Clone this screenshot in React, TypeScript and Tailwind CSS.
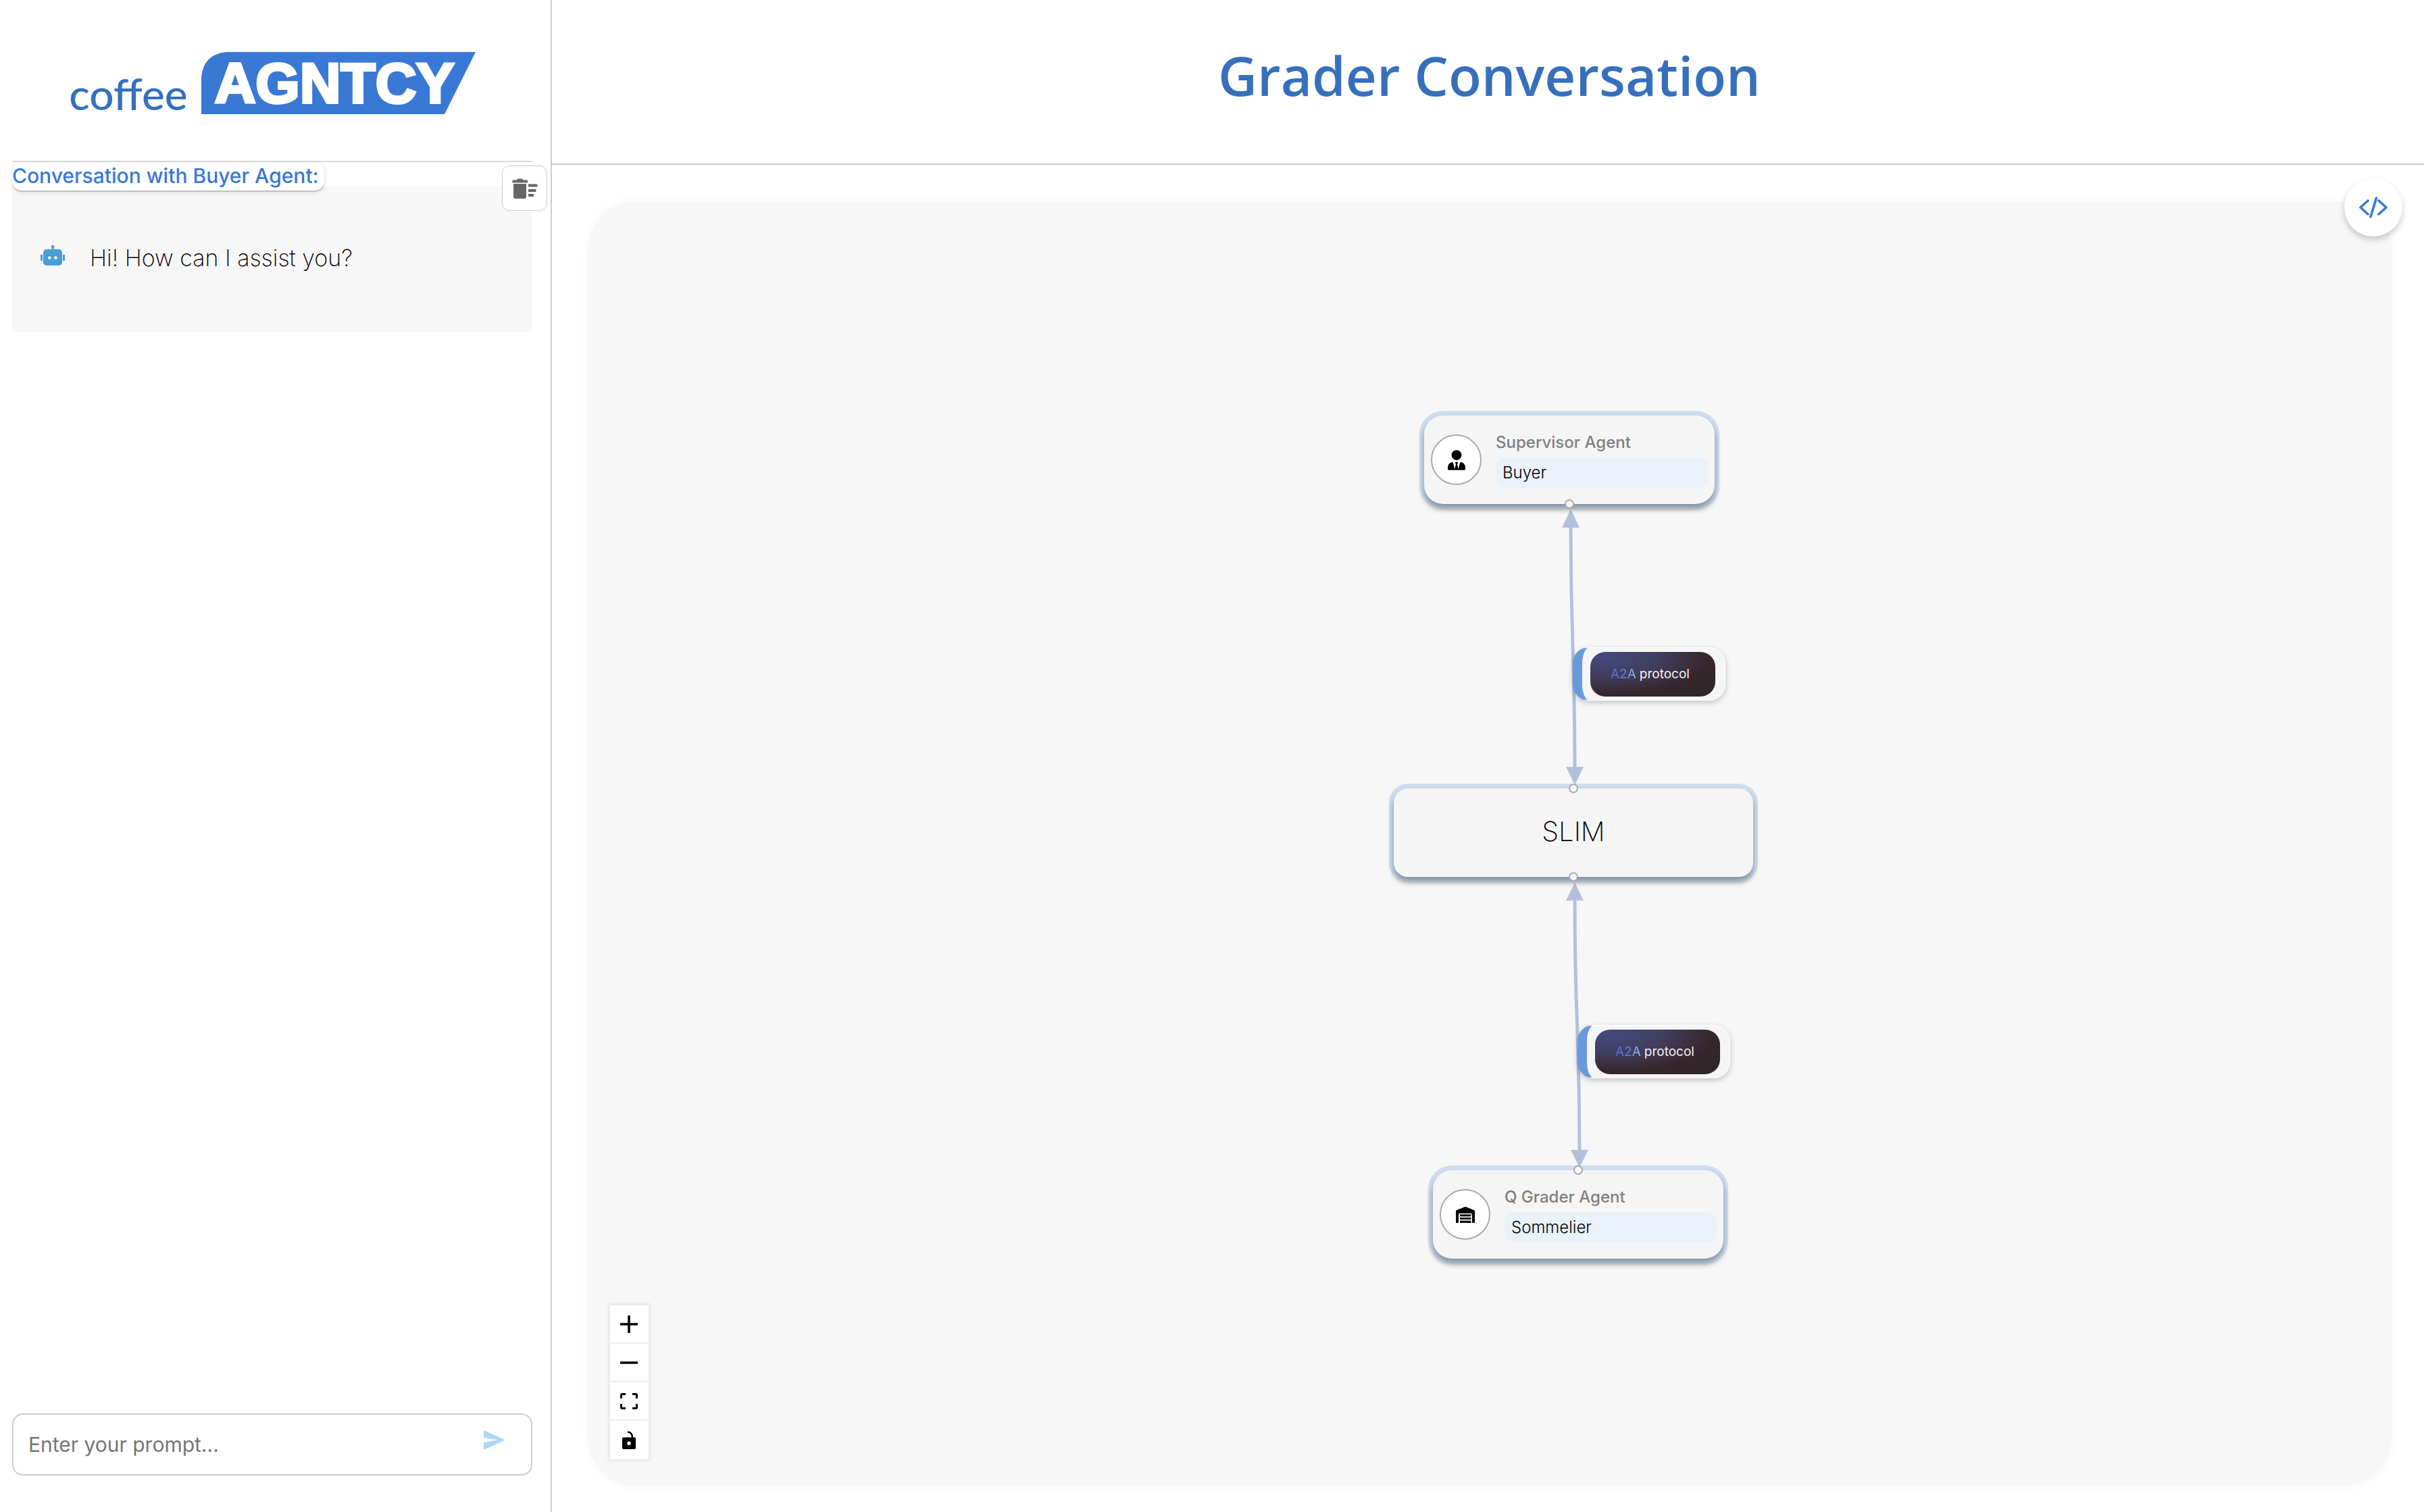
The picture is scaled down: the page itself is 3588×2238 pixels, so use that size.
import type { ReactNode } from "react";

function RobotIcon() {
  return (
    <svg viewBox="0 0 36 32" className="h-8 w-9 shrink-0" aria-hidden="true">
      <g fill="#489dd6">
        <rect x="4" y="7" width="28" height="24" rx="5" />
        <rect x="0" y="15" width="3" height="9" />
        <rect x="33" y="15" width="3" height="9" />
        <rect x="16.5" y="3" width="3" height="5" />
        <circle cx="18" cy="3" r="2.3" />
      </g>
      <g fill="#fff">
        <circle cx="13.3" cy="19.5" r="2.3" />
        <circle cx="22.3" cy="19.5" r="2.3" />
      </g>
    </svg>
  );
}

function ClearIcon() {
  return (
    <svg viewBox="0 0 38 31" className="h-[31px] w-[38px]" aria-hidden="true" fill="#666">
      <path d="M0.5 3.5H6.5L8.5 1.5H14.5L16.5 3.5H23V7.5H0.5z" />
      <path d="M2 9H21V28Q21 31 18 31H5Q2 31 2 28z" />
      <rect x="24" y="9.500" width="13.500" height="4" />
      <rect x="24" y="17" width="11.500" height="4" />
      <rect x="24" y="24" width="8" height="4" />
    </svg>
  );
}

function BuyerIcon() {
  return (
    <svg viewBox="0 0 448 512" className="h-[30px] w-[26px]" aria-hidden="true">
      <path d="M96 128a128 128 0 1 0 256 0 128 128 0 1 0-256 0M209.100 359.200l-18.600-31c-6.400-10.700 1.300-24.200 13.700-24.200h39.500c12.400 0 20.100 13.600 13.700 24.200l-18.600 31 33.400 123.900 39.500-161.200C318.500 307.300 332.500 304.300 342 306.700 403 322.200 448 377.100 448 442.300v40.600c0 16.200-13.200 29.100-29.300 29.100H29.300C13.200 512 0 499.100 0 482.900v-40.600C0 377.100 45 322.200 106 306.700c9.500-2.400 23.500.6 30.200 15.200l39.500 161.200z" />
    </svg>
  );
}

function WarehouseIcon() {
  return (
    <svg viewBox="0 0 28 24" className="h-6 w-7" aria-hidden="true">
      <path d="M0 24V7Q0 5.500 1.500 4.900L12.800.4Q14 0 15.200.4L26.500 4.900Q28 5.500 28 7V24H24V12Q24 10 22 10H6Q4 10 4 12V24z" />
      <path d="M6 11.500H22.500V14.500H6zM6 16.200H22.500V19H6zM6 20.800H22.500V24H6z" />
    </svg>
  );
}

function NodeHandle({ edge }: { edge: "top" | "bottom" }) {
  return (
    <span
      className={
        "absolute left-1/2 size-[14px] -translate-x-1/2 rounded-full border-2 border-[#aaa] bg-[#f7f7f7] " +
        (edge === "top" ? "-top-[7px]" : "-bottom-[7px]")
      }
    />
  );
}

const ring = "shadow-[0_0_0_7px_rgba(169,195,231,0.5),0_6px_10px_rgba(0,0,0,0.66)]";

function AgentNode({ place, title, role, icon, handle }: { place: string; title: string; role: string; icon: ReactNode; handle: "top" | "bottom" }) {
  return (
    <div className={`absolute flex h-[131px] w-[430px] items-center rounded-[28px] bg-[#f5f5f5] px-[10px] ${ring} ${place}`}>
      <span className="flex size-[75px] shrink-0 items-center justify-center rounded-full border-2 border-[#aaa] bg-white">{icon}</span>
      <div className="ml-[21px] flex min-w-0 grow flex-col gap-[6px]">
        <h2 className="text-[24px] leading-8 font-medium text-[#808080]">{title}</h2>
        <p className="h-[45px] rounded-[14px] bg-[#eaf1f9] px-[10px] text-[24px] leading-[45px] font-light text-black">{role}</p>
      </div>
      <NodeHandle edge={handle} />
    </div>
  );
}

function ProtocolLabel({ place }: { place: string }) {
  return (
    <div className={`absolute flex h-[79px] w-[226px] items-center rounded-[24px] border border-l-[14px] border-white border-l-[#6999dd] bg-[#f5f5f5] pl-3 shadow-[0_3px_8px_rgba(0,0,0,0.22)] ${place}`}>
      <span className="flex h-[66px] w-[185px] items-center justify-center gap-[5px] rounded-[22px] bg-[radial-gradient(ellipse_at_12%_12%,#434a80_0%,#413d5c_35%,#35272b_66%,#2e272b_88%)] pr-6 pl-4 text-[19px] leading-none whitespace-nowrap text-[#f2f2f2]">
        <span className="bg-linear-to-r from-[#4d6be6] via-[#5b80ee] to-[#a3c6f2] bg-clip-text text-transparent">A2A</span>
        <span>protocol</span>
      </span>
    </div>
  );
}

function Edges() {
  return (
    <svg className="absolute top-0 left-0 h-[1902px] w-[2670px]" viewBox="0 0 2670 1902" aria-hidden="true">
      <g fill="none" stroke="#b1c1dd" strokeWidth="5">
        <path d="M1455 480C1455 659 1461 659 1461 842" />
        <path d="M1461 1034C1461 1218 1468 1218 1468 1406" />
      </g>
      <g fill="#b1c1dd">
        <path d="M1455 456L1468 483H1442z" />
        <path d="M1461 864L1448 837H1474z" />
        <path d="M1461 1008L1448 1035H1474z" />
        <path d="M1468 1430L1455 1404H1481z" />
      </g>
    </svg>
  );
}

function Control({ label, children }: { label: string; children: ReactNode }) {
  return (
    <button type="button" aria-label={label} className="flex h-[57px] w-full items-center justify-center border-b-2 border-[#eee] bg-white pr-px last:border-b-0">
      <svg viewBox="0 0 28 28" className="size-7" aria-hidden="true">{children}</svg>
    </button>
  );
}

function Sidebar() {
  return (
    <aside className="flex w-[817px] shrink-0 flex-col border-r-2 border-[#ccc] pr-[27px] pl-[18px]">
      <div className="flex h-[238px] items-center justify-center pt-2">
        <span className="mt-8 mr-5 font-[Lato] text-[64px] leading-none font-medium text-[#3670bd]">coffee</span>
        <span className="relative flex h-[92px] w-[406px] items-center">
          <svg className="absolute inset-0 h-full w-full" viewBox="0 0 406 92" aria-hidden="true">
            <path d="M0 92V37Q3 4 36 0H406L360 92z" fill="#3a78d6" />
          </svg>
          <span className="relative ml-5 font-['Liberation_Sans'] text-[84px] leading-none font-bold text-white [-webkit-text-stroke:4px_white]">AGNTCY</span>
        </span>
      </div>
      <section className="relative border-t-2 border-[#ddd]">
        <h2 className="absolute top-0 left-0 h-[42px] rounded-[14px] bg-white pr-2 text-[30px] leading-[40px] font-medium whitespace-nowrap text-[#3a78d6] shadow-[0_2px_1px_rgba(0,0,0,0.16),0_2px_8px_rgba(0,0,0,0.12)]">
          Conversation with Buyer Agent:
        </h2>
        <button type="button" aria-label="Clear conversation" className="absolute top-[5px] -right-[22px] flex size-[67px] items-center justify-center rounded-[11px] border border-[#ccc] bg-white">
          <ClearIcon />
        </button>
        <div className="mt-9 flex h-[215px] items-start gap-[37px] bg-[#f7f7f7] pt-[82px] pl-[42px]">
          <span className="pt-1"><RobotIcon /></span>
          <p className="text-[34px] leading-[48px] font-extralight text-black">Hi! How can I assist you?</p>
        </div>
      </section>
      <form className="mt-auto mb-[54px] flex h-[92px] items-center rounded-[16px] border-2 border-[#ccc] bg-white pr-[38px] pl-[22px]" onSubmit={(e) => e.preventDefault()}>
        <input aria-label="Prompt" placeholder="Enter your prompt..." className="min-w-0 grow bg-transparent text-[30px] leading-[44px] text-black outline-none placeholder:text-[#757575]" />
        <button type="submit" aria-label="Send" className="pb-[14px]">
          <svg viewBox="0 0 32 29" className="h-[29px] w-8" aria-hidden="true">
            <path d="M0 0L32 14.500L0 29V18L21 14.500L0 11z" fill="#a8daf3" />
          </svg>
        </button>
      </form>
    </aside>
  );
}

export default function App() {
  return (
    <div className="flex min-h-screen bg-white font-[Inter,sans-serif]">
      <Sidebar />
      <main className="flex min-w-0 grow flex-col">
        <header className="flex h-[244px] shrink-0 items-center justify-center border-b-2 border-[#ccc] pb-5 pl-1">
          <h1 className="font-['Open_Sans'] text-[80px] leading-none font-semibold text-[#3670bd]">Grader Conversation</h1>
        </header>
        <div className="relative flex grow pt-[54px] pr-12 pb-[38px] pl-[53px]">
          <div className="relative grow rounded-[72px] bg-[#f7f7f7] shadow-[0_0_16px_#f7f7f7]">
            <Edges />
            <AgentNode place="top-[317px] left-[1238px]" title="Supervisor Agent" role="Buyer" icon={<BuyerIcon />} handle="bottom" />
            <ProtocolLabel place="top-[660px] left-[1458px]" />
            <div className={`absolute top-[869px] left-[1193px] flex h-[131px] w-[532px] items-center justify-center rounded-[21px] bg-[#f5f5f5] pb-1 text-[40px] font-extralight text-black ${ring}`}>
              SLIM
              <NodeHandle edge="top" />
              <NodeHandle edge="bottom" />
            </div>
            <ProtocolLabel place="top-[1219px] left-[1465px]" />
            <AgentNode place="top-[1434px] left-[1251px]" title="Q Grader Agent" role="Sommelier" icon={<WarehouseIcon />} handle="top" />
            <div className="absolute bottom-10 left-[33px] flex w-[57px] flex-col shadow-[0_0_4px_3px_rgba(0,0,0,0.06)]">
              <Control label="Zoom in"><path d="M1 14H27M14 1V27" stroke="#000" strokeWidth="3.500" /></Control>
              <Control label="Zoom out"><path d="M1 14H27" stroke="#000" strokeWidth="3.500" /></Control>
              <Control label="Fit view"><path d="M2.500 10V5Q2.500 3.500 4 3.500H9M19 3.500H24Q25.500 3.500 25.500 5V10M25.500 18V23Q25.500 24.500 24 24.500H19M9 24.500H4Q2.500 24.500 2.500 23V18" fill="none" stroke="#000" strokeWidth="3" /></Control>
              <Control label="Toggle interactivity">
                <path d="M12 1.500Q19 2 19 10" fill="none" stroke="#000" strokeWidth="2.500" />
                <path fillRule="evenodd" d="M6 9.500H22Q24 9.500 24 11.500V25Q24 27 22 27H6Q4 27 4 25V11.500Q4 9.500 6 9.500zM14 15.500a2.700 2.700 0 1 0 0 5.400 2.700 2.700 0 1 0 0-5.400z" />
              </Control>
            </div>
          </div>
          <button type="button" aria-label="View code" className="absolute top-5 right-8 flex size-[86px] items-center justify-center rounded-full bg-white shadow-[0_5px_10px_rgba(0,0,0,0.2)]">
            <svg viewBox="0 0 42 32" className="h-8 w-[42px]" fill="none" stroke="#3a78d6" strokeWidth="3.600" strokeLinecap="round" strokeLinejoin="round" aria-hidden="true">
              <path d="M13 6L2 16L13 26M29 6L40 16L29 26M25.500 2L17 30" />
            </svg>
          </button>
        </div>
      </main>
    </div>
  );
}
